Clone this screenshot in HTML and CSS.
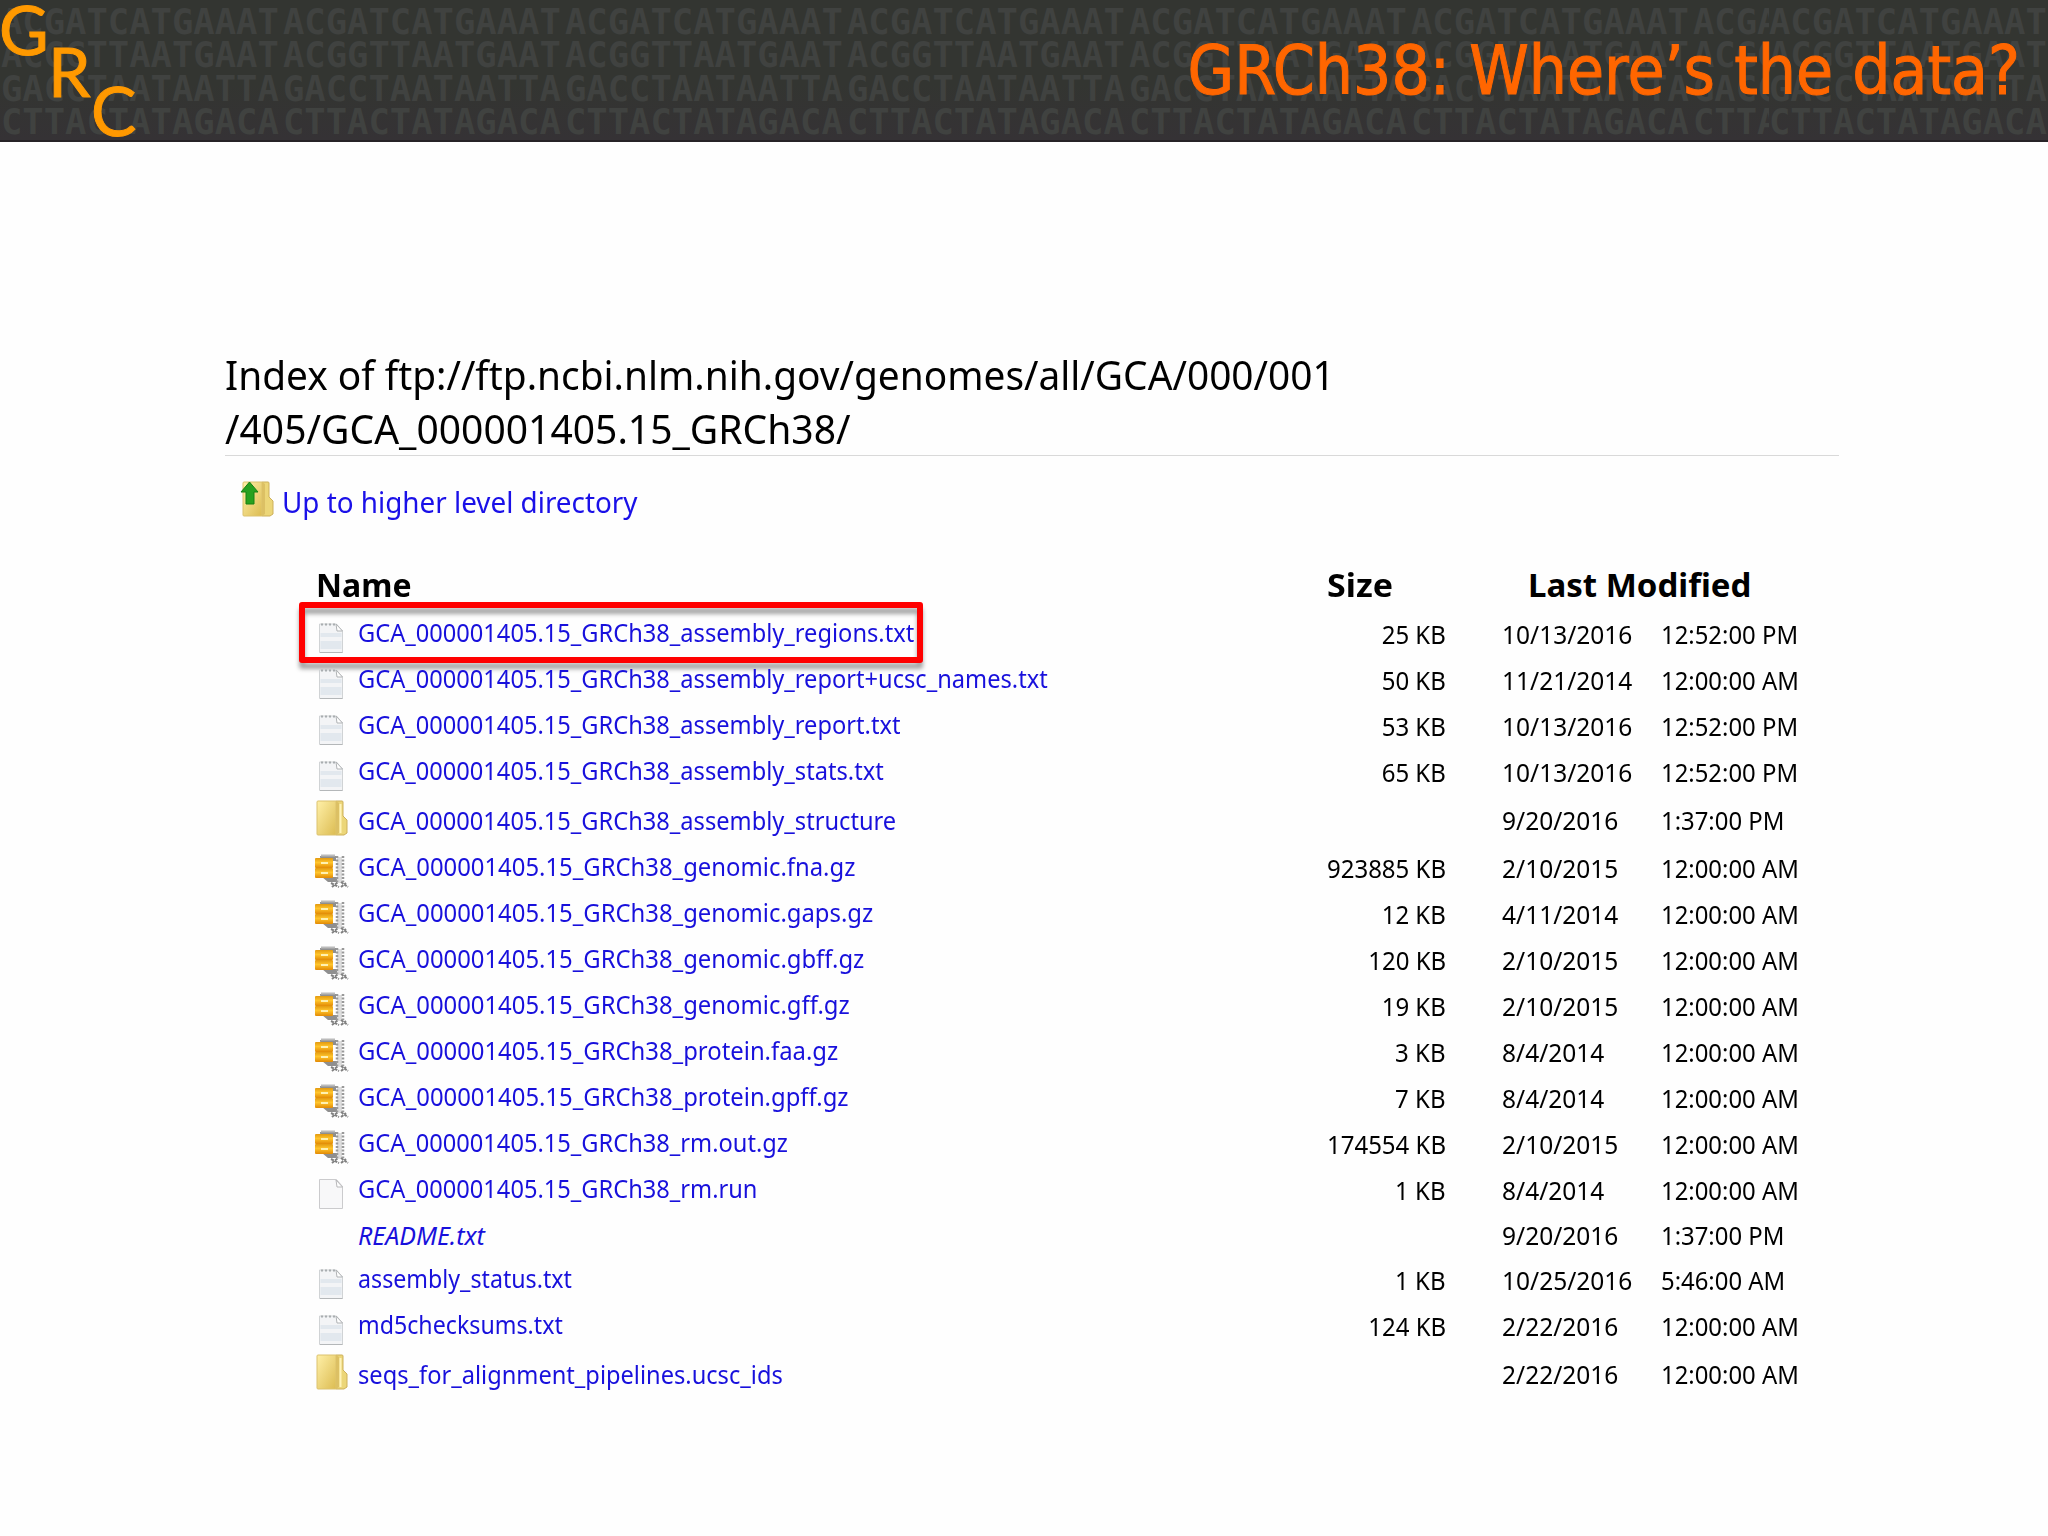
FILE: index.html
```
<!DOCTYPE html>
<html lang="en">
<head>
    <meta charset="UTF-8">
    <title>GRCh38: Where’s the data?</title>
    <link rel="stylesheet" href="styles.css">
</head>
<body>
    <svg class="defs" width="0" height="0">
        <defs>
            <linearGradient id="gold" x1="0" y1="0" x2="1" y2="1">
                <stop offset="0" stop-color="#fff0a8"/>
                <stop offset="1" stop-color="#dcbc52"/>
            </linearGradient>
            <linearGradient id="zipgold" x1="0" y1="0" x2="0" y2="1">
                <stop offset="0" stop-color="#e39a10"/>
                <stop offset=".45" stop-color="#ffc52c"/>
                <stop offset="1" stop-color="#e28a05"/>
            </linearGradient>
            <symbol id="folder" viewBox="0 0 32 36">
                <path d="M20 1h6q1 0 1 1v14l4 4v13l-3 2h-8z" fill="#ecd678" stroke="#cdb05a"/>
                <path d="M2 1h18v34H2q-1 0-1-1V2q0-1 1-1z" fill="url(#gold)" stroke="#dcc26e"/>
                <path d="M20 1l3 2v30l-3 2z" fill="#dcc064"/>
                <path d="M24.5 4v29" stroke="#fff3b8" stroke-width="2"/>
            </symbol>
            <symbol id="text" viewBox="0 0 26 32">
                <path d="M1.5 2h17l6 7v21.5h-23z" fill="#f3f4f6" stroke="#d0d3d5"/>
                <path d="M2 30.5h22.5" stroke="#b4b7b9"/>
                <path d="M2.5 11h21v4h-21zM2.5 19h21v8h-21z" fill="#e2e8ee"/>
                <path d="M18 2l1 7h5.5z" fill="#fff" stroke="#b0b3b5"/>
                <path d="M3 2.5h14" stroke="#a9adb0" stroke-width="2" stroke-dasharray="2 2"/>
            </symbol>
            <symbol id="blank" viewBox="0 0 26 32">
                <path d="M1.5 1.5h17l6 7v22h-23z" fill="#f8f8f9" stroke="#cbcbcd"/>
                <path d="M18 2l1 7h5.5z" fill="#fff" stroke="#b8b8ba"/>
            </symbol>
            <symbol id="zip" viewBox="0 0 36 36">
                <path d="M6 2h16v5h-4v16h5v5h-9l-6-5z" fill="#8f8f8f"/>
                <path d="M7 1.5h14" stroke="#bbb" stroke-width="2"/>
                <rect x="1" y="4" width="18" height="10" rx="1" fill="url(#zipgold)"/>
                <rect x="1" y="14" width="18" height="10" rx="1" fill="url(#zipgold)"/>
                <path d="M7 9h7M7 19h7" stroke="#fff0b0" stroke-width="2"/>
                <path d="M25.5 3v26" stroke="#ddd" stroke-width="5"/>
                <path d="M23 2v26M29 2v26" stroke="#999" stroke-width="2.5" stroke-dasharray="2 1.5"/>
                <path d="M17 29l8 4M18 33l6-5M27 28l7 5M27 33l5-4" stroke="#808080" stroke-width="2" stroke-dasharray="3 1"/>
            </symbol>
        </defs>
    </svg>

    <header class="banner">
        <div class="dna">
            <div class="dna-block">ACGATCATGAAAT<br>ACGGTTAATGAAT<br>GACCTAATAATTA<br>CTTACTATAGACA</div>
            <div class="dna-block">ACGATCATGAAAT<br>ACGGTTAATGAAT<br>GACCTAATAATTA<br>CTTACTATAGACA</div>
            <div class="dna-block">ACGATCATGAAAT<br>ACGGTTAATGAAT<br>GACCTAATAATTA<br>CTTACTATAGACA</div>
            <div class="dna-block">ACGATCATGAAAT<br>ACGGTTAATGAAT<br>GACCTAATAATTA<br>CTTACTATAGACA</div>
            <div class="dna-block">ACGATCATGAAAT<br>ACGGTTAATGAAT<br>GACCTAATAATTA<br>CTTACTATAGACA</div>
            <div class="dna-block">ACGATCATGAAAT<br>ACGGTTAATGAAT<br>GACCTAATAATTA<br>CTTACTATAGACA</div>
            <div class="dna-block cut">ACGA<br>ACGG<br>GACC<br>CTTA</div>
            <div class="dna-block">ACGATCATGAAAT<br>ACGGTTAATGAAT<br>GACCTAATAATTA<br>CTTACTATAGACA</div>
        </div>
        <div class="logo"><span class="logo-g">G</span><span class="logo-r">R</span><span class="logo-c">C</span></div>
        <h1 class="title">GRCh38: Where’s the data?</h1>
    </header>

    <main class="listing">
        <h2 class="path"><span class="path-1">Index of ftp://ftp.ncbi.nlm.nih.gov/genomes/all/GCA/000/001</span><br><span class="path-2">/405/GCA_000001405.15_GRCh38/</span></h2>
        <p class="up">
            <svg class="up-icon" viewBox="0 0 34 36">
                <path d="M22 1h6q1 0 1 1v14l4 4v13l-3 2h-8z" fill="#ecd678" stroke="#cdb05a"/>
                <path d="M4 1h18v34H4q-1 0-1-1V2q0-1 1-1z" fill="url(#gold)" stroke="#dcc26e"/>
                <path d="M22 1l3 2v30l-3 2z" fill="#dcc064"/>
                <path d="M9.5 1l8.5 10h-4v12h-8V11H1z" fill="#27a11f" stroke="#168013"/>
            </svg>
            <a class="up-link">Up to higher level directory</a>
        </p>
        <table class="files">
            <thead>
                <tr><th class="name"><span>Name</span></th><th class="size"><span>Size</span></th><th class="date"><span>Last Modified</span></th><th class="time"></th></tr>
            </thead>
            <tbody>
                <tr class="marked"><td class="name"><svg class="icon"><use href="#text"/></svg><a>GCA_000001405.15_GRCh38_assembly_regions.txt</a></td><td class="size"><span>25 KB</span></td><td class="date"><span>10/13/2016</span></td><td class="time"><span>12:52:00 PM</span></td></tr>
                <tr><td class="name"><svg class="icon"><use href="#text"/></svg><a>GCA_000001405.15_GRCh38_assembly_report+ucsc_names.txt</a></td><td class="size"><span>50 KB</span></td><td class="date"><span>11/21/2014</span></td><td class="time"><span>12:00:00 AM</span></td></tr>
                <tr><td class="name"><svg class="icon"><use href="#text"/></svg><a>GCA_000001405.15_GRCh38_assembly_report.txt</a></td><td class="size"><span>53 KB</span></td><td class="date"><span>10/13/2016</span></td><td class="time"><span>12:52:00 PM</span></td></tr>
                <tr><td class="name"><svg class="icon"><use href="#text"/></svg><a>GCA_000001405.15_GRCh38_assembly_stats.txt</a></td><td class="size"><span>65 KB</span></td><td class="date"><span>10/13/2016</span></td><td class="time"><span>12:52:00 PM</span></td></tr>
                <tr class="dir"><td class="name"><svg class="icon folder"><use href="#folder"/></svg><a>GCA_000001405.15_GRCh38_assembly_structure</a></td><td class="size"></td><td class="date"><span>9/20/2016</span></td><td class="time"><span>1:37:00 PM</span></td></tr>
                <tr class="gz"><td class="name"><svg class="icon zip"><use href="#zip"/></svg><a>GCA_000001405.15_GRCh38_genomic.fna.gz</a></td><td class="size"><span>923885 KB</span></td><td class="date"><span>2/10/2015</span></td><td class="time"><span>12:00:00 AM</span></td></tr>
                <tr class="gz"><td class="name"><svg class="icon zip"><use href="#zip"/></svg><a>GCA_000001405.15_GRCh38_genomic.gaps.gz</a></td><td class="size"><span>12 KB</span></td><td class="date"><span>4/11/2014</span></td><td class="time"><span>12:00:00 AM</span></td></tr>
                <tr class="gz"><td class="name"><svg class="icon zip"><use href="#zip"/></svg><a>GCA_000001405.15_GRCh38_genomic.gbff.gz</a></td><td class="size"><span>120 KB</span></td><td class="date"><span>2/10/2015</span></td><td class="time"><span>12:00:00 AM</span></td></tr>
                <tr class="gz"><td class="name"><svg class="icon zip"><use href="#zip"/></svg><a>GCA_000001405.15_GRCh38_genomic.gff.gz</a></td><td class="size"><span>19 KB</span></td><td class="date"><span>2/10/2015</span></td><td class="time"><span>12:00:00 AM</span></td></tr>
                <tr class="gz"><td class="name"><svg class="icon zip"><use href="#zip"/></svg><a>GCA_000001405.15_GRCh38_protein.faa.gz</a></td><td class="size"><span>3 KB</span></td><td class="date"><span>8/4/2014</span></td><td class="time"><span>12:00:00 AM</span></td></tr>
                <tr class="gz"><td class="name"><svg class="icon zip"><use href="#zip"/></svg><a>GCA_000001405.15_GRCh38_protein.gpff.gz</a></td><td class="size"><span>7 KB</span></td><td class="date"><span>8/4/2014</span></td><td class="time"><span>12:00:00 AM</span></td></tr>
                <tr><td class="name"><svg class="icon zip"><use href="#zip"/></svg><a>GCA_000001405.15_GRCh38_rm.out.gz</a></td><td class="size"><span>174554 KB</span></td><td class="date"><span>2/10/2015</span></td><td class="time"><span>12:00:00 AM</span></td></tr>
                <tr class="tall"><td class="name"><svg class="icon"><use href="#blank"/></svg><a>GCA_000001405.15_GRCh38_rm.run</a></td><td class="size"><span>1 KB</span></td><td class="date"><span>8/4/2014</span></td><td class="time"><span>12:00:00 AM</span></td></tr>
                <tr class="link"><td class="name"><a>README.txt</a></td><td class="size"></td><td class="date"><span>9/20/2016</span></td><td class="time"><span>1:37:00 PM</span></td></tr>
                <tr class="short"><td class="name"><svg class="icon"><use href="#text"/></svg><a>assembly_status.txt</a></td><td class="size"><span>1 KB</span></td><td class="date"><span>10/25/2016</span></td><td class="time"><span>5:46:00 AM</span></td></tr>
                <tr class="short"><td class="name"><svg class="icon"><use href="#text"/></svg><a>md5checksums.txt</a></td><td class="size"><span>124 KB</span></td><td class="date"><span>2/22/2016</span></td><td class="time"><span>12:00:00 AM</span></td></tr>
                <tr class="dir"><td class="name"><svg class="icon folder"><use href="#folder"/></svg><a>seqs_for_alignment_pipelines.ucsc_ids</a></td><td class="size"></td><td class="date"><span>2/22/2016</span></td><td class="time"><span>12:00:00 AM</span></td></tr>
            </tbody>
        </table>
    </main>
</body>
</html>
```
FILE: styles.css
```
body {
    margin: 0;
    height: 1536px;
    overflow: hidden;
    background-color: #fefefe;
    font-family: "Noto Sans", sans-serif;
    color: #000;
}
.defs {
    position: absolute;
}
.banner {
    position: relative;
    height: 142px;
    box-sizing: border-box;
    border-bottom: 2px solid #272327;
    background: linear-gradient(#333531 60%, #353235);
    overflow: hidden;
}
/* sequence letters behind the title */
.dna {
    position: absolute;
    top: 5px;
    left: 1px;
    display: flex;
    color: #404240;
    font: bold 35.5px/33.3px "DejaVu Sans Mono", monospace;
}
.dna-block {
    flex: none;
    width: 282px;
    white-space: nowrap;
}
.dna-block.cut {
    width: 76px;
    overflow: hidden;
}
.logo {
    position: absolute;
    top: 0;
    left: 0;
    color: #ff9900;
    font: 68px/68px Lato, sans-serif;
    -webkit-text-stroke: 1px #ff9900;
}
.logo span {
    position: absolute;
}
.logo-g { left: -1px; top: -5px; }
.logo-r { left: 48px; top: 37px; }
.logo-c { left: 91px; top: 76px; }
.title {
    position: relative;
    margin: 0;
    padding: 31px 28px 0 0;
    color: #ff6600;
    font: 67px/80px "DejaVu Sans Condensed", "DejaVu Sans", sans-serif;
    font-stretch: condensed;
    text-align: right;
    white-space: nowrap;
    -webkit-text-stroke: 1px #ff6600;
}
.listing {
    width: 1614px;
    margin: 206px 0 0 225px;
}
.path {
    height: 107px;
    margin: 0;
    border-bottom: 1px solid #d9d9d9;
    font-size: 40px;
    font-weight: normal;
    line-height: 54px;
    white-space: nowrap;
}
.path span, .up-link, .files a, .files span {
    display: inline-block;
    transform-origin: left;
}
.path-1 { transform: scaleX(0.971); }
.path-2 { transform: scaleX(0.976); }
.up {
    display: flex;
    align-items: flex-start;
    gap: 8px;
    margin: 25px 0 0 15px;
    height: 76px;
    color: #1a10e8;
    font-size: 29px;
    line-height: 42px;
}
.up-icon {
    width: 34px;
    height: 36px;
}
.up-link {
    transform: scaleX(0.96);
}
.files {
    width: 1500px;
    margin-left: 91px;
    border-collapse: collapse;
    table-layout: fixed;
    font-size: 25px;
    line-height: 30px;
    white-space: nowrap;
}
.files th, .files td {
    box-sizing: border-box;
    padding: 0;
    vertical-align: top;
}
.files th {
    height: 55px;
    padding-top: 1px;
    font-size: 33px;
    line-height: 54px;
    text-align: left;
}
.files td {
    height: 46px;
    padding-top: 7px;
}
.files .name { width: 991px; }
.files .size { width: 195px; }
.files .date { width: 159px; }
.files td.name {
    position: relative;
    padding: 5px 0 0 42px;
}
.files td.size {
    padding-right: 56px;
    text-align: right;
}
.files th.size { padding-left: 20px; }
.files th.date { padding-left: 26px; }
.files a {
    color: #1810dc;
    transform: scaleX(0.9455);
}
.files .gz a { transform: scaleX(0.954); }
.files .short a { transform: scaleX(0.928); }
.files .link a {
    font-style: italic;
    transform: none;
}
.files td.size span {
    transform: scaleX(0.96);
    transform-origin: right;
}
.date span { transform: scaleX(0.98); }
.time span { transform: scaleX(0.955); }
.files th.name span { transform: scaleX(0.97); }
.files th.size span { transform: scaleX(1.03); }
.files th.date span { transform: none; }
.icon {
    position: absolute;
    left: 2px;
    top: 10px;
    width: 26px;
    height: 32px;
}
.icon.folder {
    left: 0;
    top: 4px;
    width: 32px;
    height: 36px;
}
.icon.zip {
    left: -2px;
    top: 8px;
    width: 36px;
    height: 36px;
}
.files .dir td { height: 50px; padding-top: 9px; }
.files .tall td { height: 47px; }
.files .link td { height: 43px; padding-top: 5px; }
/* red callout round the first file */
.marked .name::after {
    content: "";
    position: absolute;
    left: -17px;
    top: -10px;
    width: 612px;
    height: 49px;
    border: 6px solid #ff0000;
    border-radius: 3px;
    filter: drop-shadow(0 6px 2px rgba(0, 0, 0, 0.35));
}
```
